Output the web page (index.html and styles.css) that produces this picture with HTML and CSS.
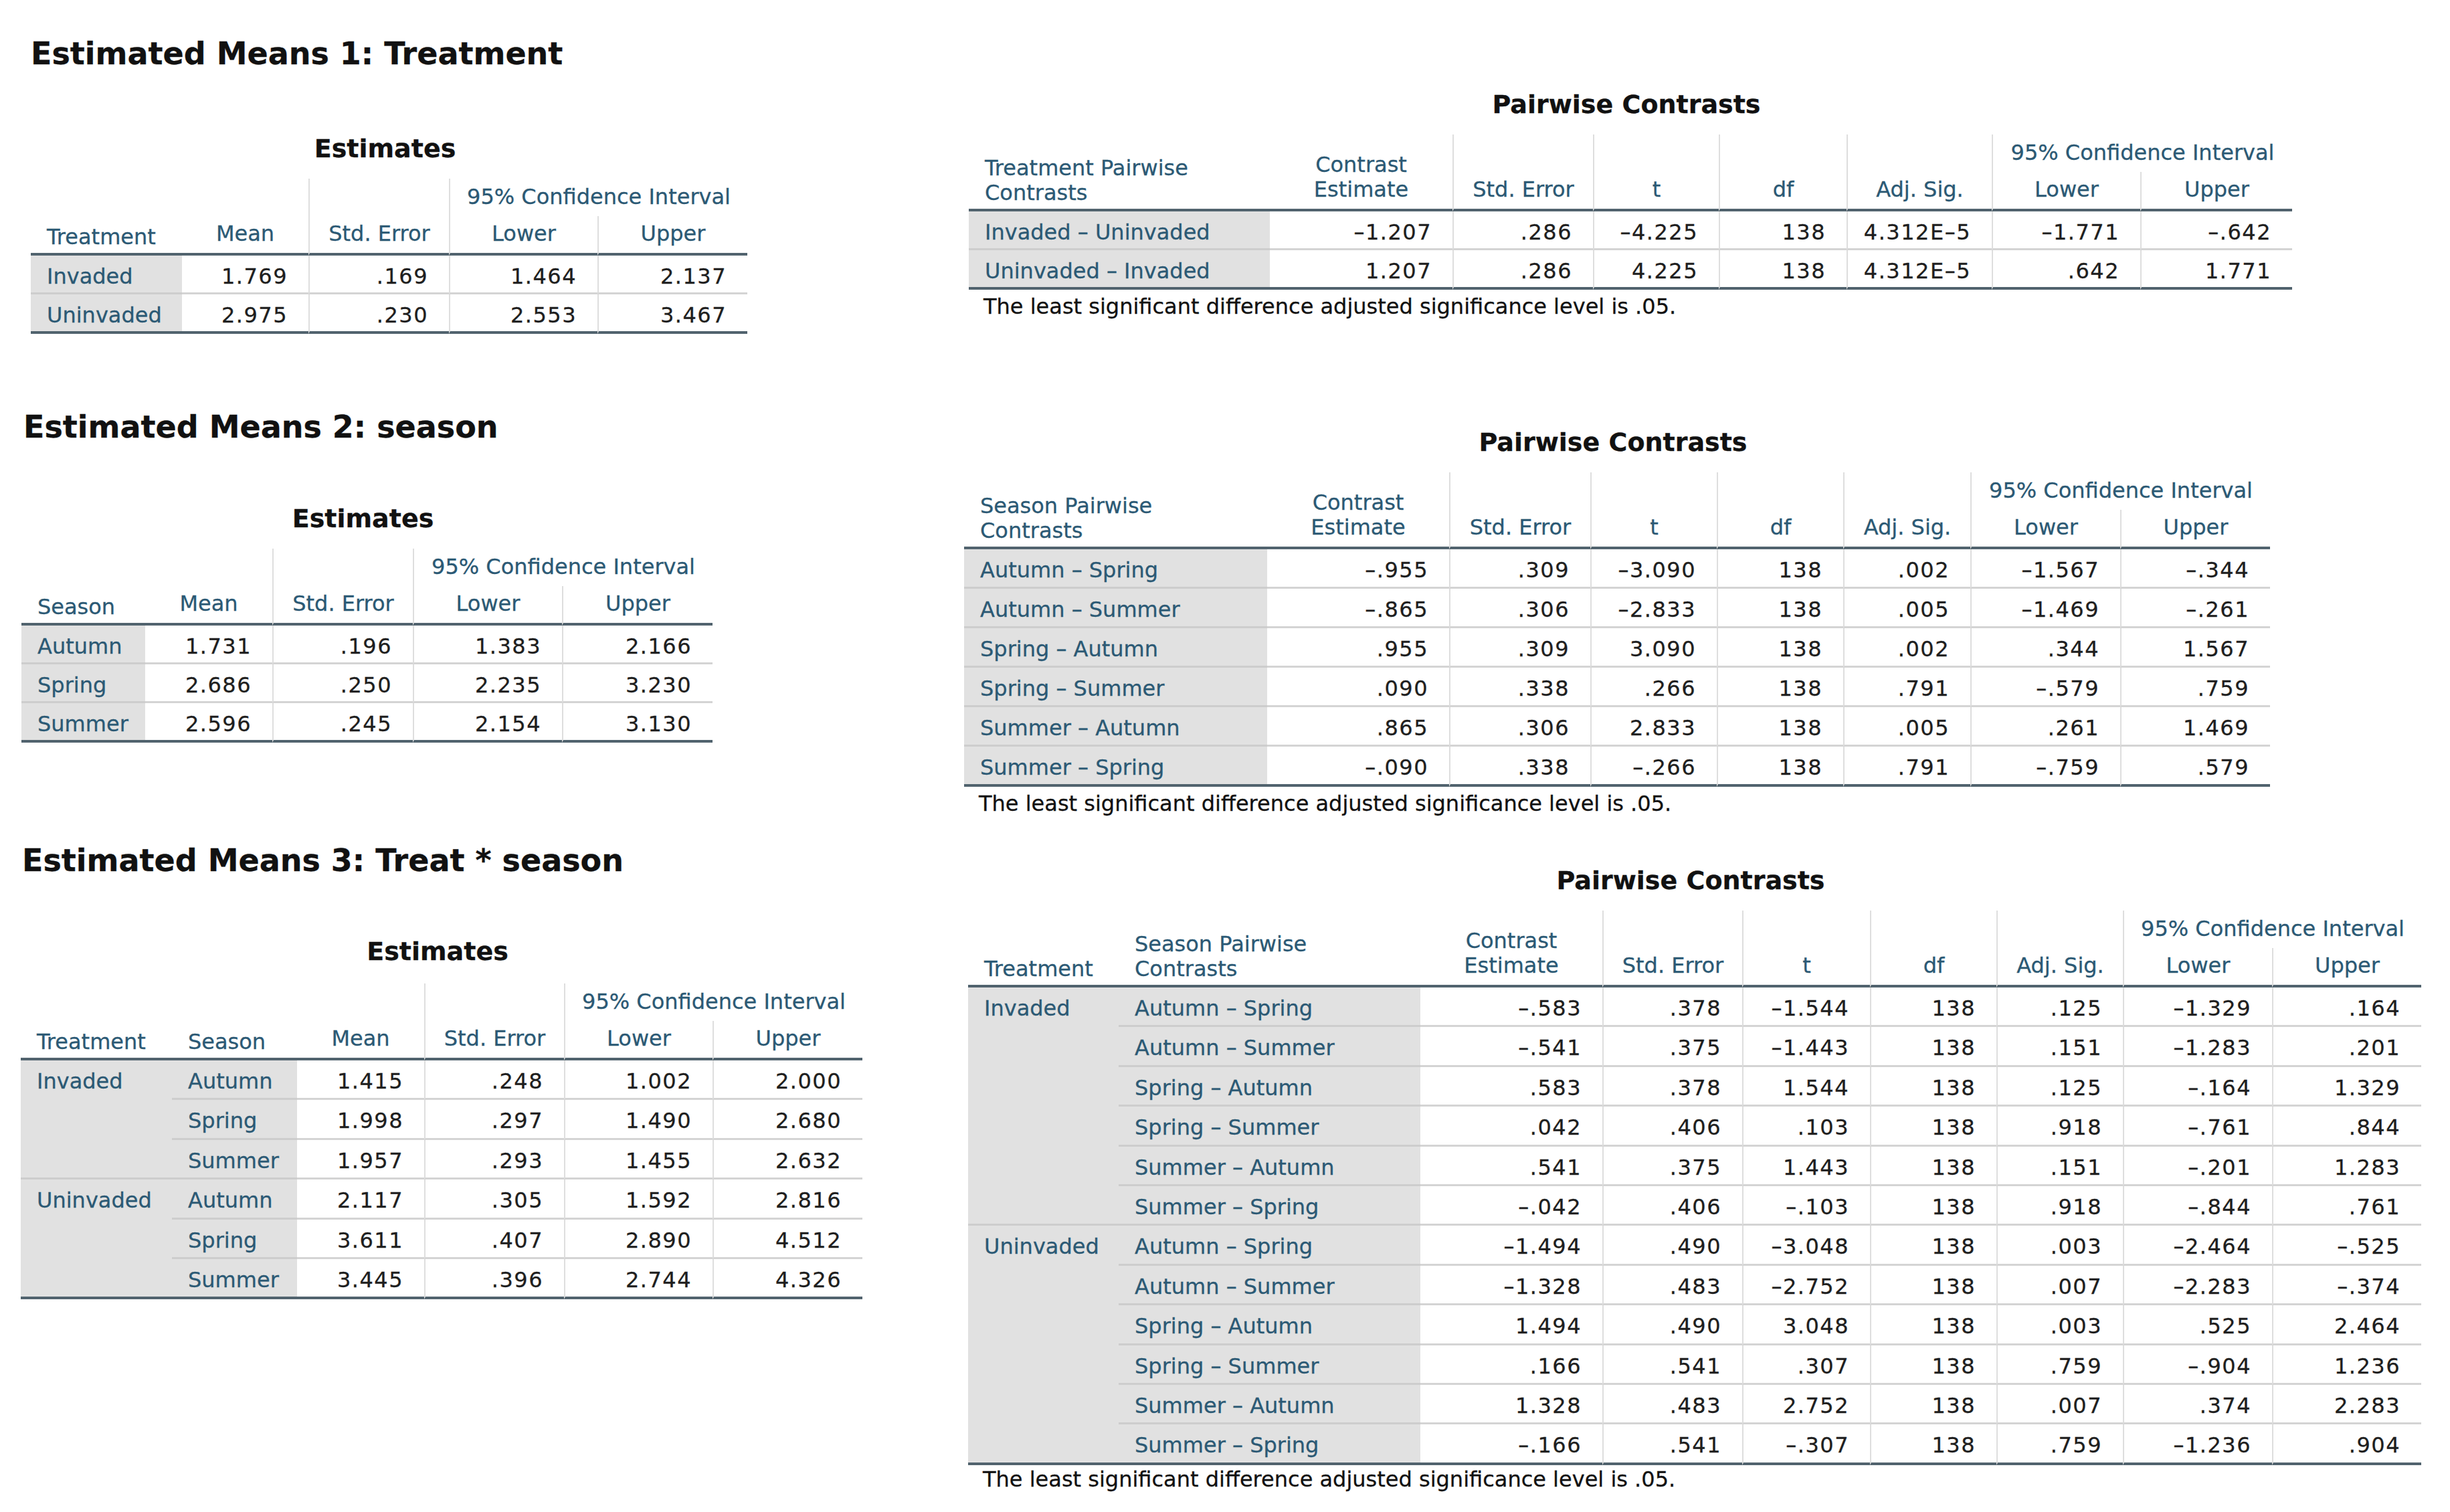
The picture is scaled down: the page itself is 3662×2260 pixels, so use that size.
FILE: index.html
```html
<!DOCTYPE html>
<html>
<head>
<meta charset="utf-8">
<title>Estimated Means</title>
<link rel="stylesheet" href="styles.css">
</head>
<body>
<div class="page">
  <div class="col-left">
    <section class="block b1">
      <h2 class="title">Estimated Means 1: Treatment</h2>
      <table class="t est est1">
        <caption>Estimates</caption>
        <colgroup><col><col><col><col><col></colgroup>
        <thead>
          <tr><th rowspan="2" class="hs lft">Treatment</th><th rowspan="2" class="hs">Mean</th><th rowspan="2" class="hs vl">Std. Error</th><th colspan="2" class="h1 vl">95% Confidence Interval</th></tr>
          <tr><th class="h2 vl">Lower</th><th class="h2 vl">Upper</th></tr>
        </thead>
        <tbody>
          <tr><th>Invaded</th><td>1.769</td><td>.169</td><td>1.464</td><td>2.137</td></tr>
          <tr><th>Uninvaded</th><td>2.975</td><td>.230</td><td>2.553</td><td>3.467</td></tr>
        </tbody>
      </table>
    </section>

    <section class="block b2">
      <h2 class="title">Estimated Means 2: season</h2>
      <table class="t est est2">
        <caption>Estimates</caption>
        <colgroup><col><col><col><col><col></colgroup>
        <thead>
          <tr><th rowspan="2" class="hs lft">Season</th><th rowspan="2" class="hs">Mean</th><th rowspan="2" class="hs vl">Std. Error</th><th colspan="2" class="h1 vl">95% Confidence Interval</th></tr>
          <tr><th class="h2 vl">Lower</th><th class="h2 vl">Upper</th></tr>
        </thead>
        <tbody>
          <tr><th>Autumn</th><td>1.731</td><td>.196</td><td>1.383</td><td>2.166</td></tr>
          <tr><th>Spring</th><td>2.686</td><td>.250</td><td>2.235</td><td>3.230</td></tr>
          <tr><th>Summer</th><td>2.596</td><td>.245</td><td>2.154</td><td>3.130</td></tr>
        </tbody>
      </table>
    </section>

    <section class="block b3">
      <h2 class="title">Estimated Means 3: Treat * season</h2>
      <table class="t est g est3">
        <caption>Estimates</caption>
        <colgroup><col><col><col><col><col><col></colgroup>
        <thead>
          <tr><th rowspan="2" class="hs lft">Treatment</th><th rowspan="2" class="hs lft">Season</th><th rowspan="2" class="hs">Mean</th><th rowspan="2" class="hs vl">Std. Error</th><th colspan="2" class="h1 vl">95% Confidence Interval</th></tr>
          <tr><th class="h2 vl">Lower</th><th class="h2 vl">Upper</th></tr>
        </thead>
        <tbody>
          <tr><th rowspan="3" class="grp">Invaded</th><th>Autumn</th><td>1.415</td><td>.248</td><td>1.002</td><td>2.000</td></tr>
          <tr><th>Spring</th><td>1.998</td><td>.297</td><td>1.490</td><td>2.680</td></tr>
          <tr><th>Summer</th><td>1.957</td><td>.293</td><td>1.455</td><td>2.632</td></tr>
          <tr><th rowspan="3" class="grp lastg">Uninvaded</th><th>Autumn</th><td>2.117</td><td>.305</td><td>1.592</td><td>2.816</td></tr>
          <tr><th>Spring</th><td>3.611</td><td>.407</td><td>2.890</td><td>4.512</td></tr>
          <tr><th>Summer</th><td>3.445</td><td>.396</td><td>2.744</td><td>4.326</td></tr>
        </tbody>
      </table>
    </section>
  </div>

  <div class="col-right">
    <section class="block pw1">
      <table class="t pw pwt1">
        <caption>Pairwise Contrasts</caption>
        <colgroup><col><col><col><col><col><col><col><col></colgroup>
        <thead>
          <tr><th rowspan="2" class="hs lft">Treatment Pairwise<br>Contrasts</th><th rowspan="2" class="hs">Contrast<br>Estimate</th><th rowspan="2" class="hs vl">Std. Error</th><th rowspan="2" class="hs vl">t</th><th rowspan="2" class="hs vl">df</th><th rowspan="2" class="hs vl">Adj. Sig.</th><th colspan="2" class="h1 vl">95% Confidence Interval</th></tr>
          <tr><th class="h2 vl">Lower</th><th class="h2 vl">Upper</th></tr>
        </thead>
        <tbody>
          <tr><th>Invaded – Uninvaded</th><td>–1.207</td><td>.286</td><td>–4.225</td><td>138</td><td>4.312E–5</td><td>–1.771</td><td>–.642</td></tr>
          <tr><th>Uninvaded – Invaded</th><td>1.207</td><td>.286</td><td>4.225</td><td>138</td><td>4.312E–5</td><td>.642</td><td>1.771</td></tr>
        </tbody>
      </table>
      <p class="note">The least significant difference adjusted significance level is .05.</p>
    </section>

    <section class="block pw2">
      <table class="t pw pwt2">
        <caption>Pairwise Contrasts</caption>
        <colgroup><col><col><col><col><col><col><col><col></colgroup>
        <thead>
          <tr><th rowspan="2" class="hs lft">Season Pairwise<br>Contrasts</th><th rowspan="2" class="hs">Contrast<br>Estimate</th><th rowspan="2" class="hs vl">Std. Error</th><th rowspan="2" class="hs vl">t</th><th rowspan="2" class="hs vl">df</th><th rowspan="2" class="hs vl">Adj. Sig.</th><th colspan="2" class="h1 vl">95% Confidence Interval</th></tr>
          <tr><th class="h2 vl">Lower</th><th class="h2 vl">Upper</th></tr>
        </thead>
        <tbody>
          <tr><th>Autumn – Spring</th><td>–.955</td><td>.309</td><td>–3.090</td><td>138</td><td>.002</td><td>–1.567</td><td>–.344</td></tr>
          <tr><th>Autumn – Summer</th><td>–.865</td><td>.306</td><td>–2.833</td><td>138</td><td>.005</td><td>–1.469</td><td>–.261</td></tr>
          <tr><th>Spring – Autumn</th><td>.955</td><td>.309</td><td>3.090</td><td>138</td><td>.002</td><td>.344</td><td>1.567</td></tr>
          <tr><th>Spring – Summer</th><td>.090</td><td>.338</td><td>.266</td><td>138</td><td>.791</td><td>–.579</td><td>.759</td></tr>
          <tr><th>Summer – Autumn</th><td>.865</td><td>.306</td><td>2.833</td><td>138</td><td>.005</td><td>.261</td><td>1.469</td></tr>
          <tr><th>Summer – Spring</th><td>–.090</td><td>.338</td><td>–.266</td><td>138</td><td>.791</td><td>–.759</td><td>.579</td></tr>
        </tbody>
      </table>
      <p class="note">The least significant difference adjusted significance level is .05.</p>
    </section>

    <section class="block pw3">
      <table class="t pw g pwt3">
        <caption>Pairwise Contrasts</caption>
        <colgroup><col><col><col><col><col><col><col><col><col></colgroup>
        <thead>
          <tr><th rowspan="2" class="hs lft">Treatment</th><th rowspan="2" class="hs lft">Season Pairwise<br>Contrasts</th><th rowspan="2" class="hs">Contrast<br>Estimate</th><th rowspan="2" class="hs vl">Std. Error</th><th rowspan="2" class="hs vl">t</th><th rowspan="2" class="hs vl">df</th><th rowspan="2" class="hs vl">Adj. Sig.</th><th colspan="2" class="h1 vl">95% Confidence Interval</th></tr>
          <tr><th class="h2 vl">Lower</th><th class="h2 vl">Upper</th></tr>
        </thead>
        <tbody>
          <tr><th rowspan="6" class="grp">Invaded</th><th>Autumn – Spring</th><td>–.583</td><td>.378</td><td>–1.544</td><td>138</td><td>.125</td><td>–1.329</td><td>.164</td></tr>
          <tr><th>Autumn – Summer</th><td>–.541</td><td>.375</td><td>–1.443</td><td>138</td><td>.151</td><td>–1.283</td><td>.201</td></tr>
          <tr><th>Spring – Autumn</th><td>.583</td><td>.378</td><td>1.544</td><td>138</td><td>.125</td><td>–.164</td><td>1.329</td></tr>
          <tr><th>Spring – Summer</th><td>.042</td><td>.406</td><td>.103</td><td>138</td><td>.918</td><td>–.761</td><td>.844</td></tr>
          <tr><th>Summer – Autumn</th><td>.541</td><td>.375</td><td>1.443</td><td>138</td><td>.151</td><td>–.201</td><td>1.283</td></tr>
          <tr><th>Summer – Spring</th><td>–.042</td><td>.406</td><td>–.103</td><td>138</td><td>.918</td><td>–.844</td><td>.761</td></tr>
          <tr><th rowspan="6" class="grp lastg">Uninvaded</th><th>Autumn – Spring</th><td>–1.494</td><td>.490</td><td>–3.048</td><td>138</td><td>.003</td><td>–2.464</td><td>–.525</td></tr>
          <tr><th>Autumn – Summer</th><td>–1.328</td><td>.483</td><td>–2.752</td><td>138</td><td>.007</td><td>–2.283</td><td>–.374</td></tr>
          <tr><th>Spring – Autumn</th><td>1.494</td><td>.490</td><td>3.048</td><td>138</td><td>.003</td><td>.525</td><td>2.464</td></tr>
          <tr><th>Spring – Summer</th><td>.166</td><td>.541</td><td>.307</td><td>138</td><td>.759</td><td>–.904</td><td>1.236</td></tr>
          <tr><th>Summer – Autumn</th><td>1.328</td><td>.483</td><td>2.752</td><td>138</td><td>.007</td><td>.374</td><td>2.283</td></tr>
          <tr><th>Summer – Spring</th><td>–.166</td><td>.541</td><td>–.307</td><td>138</td><td>.759</td><td>–1.236</td><td>.904</td></tr>
        </tbody>
      </table>
      <p class="note">The least significant difference adjusted significance level is .05.</p>
    </section>
  </div>
</div>
</body>
</html>
```

FILE: styles.css
```css
* { box-sizing: border-box; }
html, body { margin: 0; padding: 0; background: #ffffff; }
body {
  font-family: "DejaVu Sans", "Liberation Sans", sans-serif;
  color: #1c1c1c;
}
.page {
  display: flex;
  align-items: flex-start;
  width: 3662px;
  height: 2260px;
  overflow: hidden;
}
.col-left { width: 1441px; flex: none; }
.col-right { flex: 1; }

.block {
  display: flex;
  flex-direction: column;
  align-items: flex-start;
}

.title {
  margin: 0;
  font-size: 46px;
  line-height: 56px;
  font-weight: bold;
  color: #111111;
  -webkit-text-stroke: 0.3px #111111;
}

/* left column blocks */
.b1 { padding-left: 46px; margin-top: 52px; }
.b1 .est { margin-top: 91px; }
.b2 { padding-left: 32px; margin-top: 111px; }
.b2 .title { margin-left: 3px; }
.b2 .est { margin-top: 86px; }
.b3 { padding-left: 31px; margin-top: 148px; }
.b3 .title { margin-left: 2px; }
.b3 .est { margin-top: 85px; }
.b3 .est caption { padding-bottom: 25px; }

/* right column blocks */
.pw1 { margin-top: 133px; margin-left: 7px; }
.pw2 { margin-top: 161px; margin-left: 0; }
.pw3 { margin-top: 73px; margin-left: 6px; }
.pw3 caption { padding-bottom: 25px; }
.pw3 .note { margin-top: 3px; }

.note {
  margin: 7px 0 0 0;
  padding-left: 22px;
  font-size: 32px;
  line-height: 37px;
  color: #111111;
  -webkit-text-stroke: 0.3px #111111;
}

/* tables */
table.t {
  border-collapse: separate;
  border-spacing: 0;
  table-layout: fixed;
  font-size: 32px;
  line-height: 37px;
}
.t caption {
  caption-side: top;
  font-size: 38px;
  line-height: 46px;
  font-weight: bold;
  color: #111111;
  -webkit-text-stroke: 0.3px #111111;
  text-align: center;
  padding: 0 12px 22px 0;
}
.t th, .t td { padding: 0; white-space: nowrap; }

.t thead th {
  font-weight: normal;
  color: #2b5974;
  -webkit-text-stroke: 0.3px #2b5974;
  text-align: center;
  vertical-align: bottom;
}
.t thead .hs { padding: 0 0 10px 0; border-bottom: 4px solid #51636e; }
.t thead .h1 { padding: 9px 0 10px 0; }
.t thead .h2 { padding: 8px 0 10px 0; border-bottom: 4px solid #51636e; }
.t thead .lft { text-align: left; padding-left: 24px; padding-bottom: 5px; }
.t .vl { border-left: 2px solid #dedede; }

.t tbody th {
  font-weight: normal;
  color: #2b5974;
  -webkit-text-stroke: 0.3px #2b5974;
  text-align: left;
  vertical-align: top;
  padding: 13px 0 5px 24px;
  background: #e1e1e1;
  border-bottom: 3px solid #cdcdcd;
}
.t tbody td {
  text-align: right;
  vertical-align: top;
  padding: 13px 31px 5px 0;
  letter-spacing: 1.5px;
  color: #1e1e1e;
  -webkit-text-stroke: 0.3px #1e1e1e;
  border-bottom: 3px solid #d4d4d4;
}
.t tbody td + td { border-left: 2px solid #dedede; }
.t tbody tr:last-child th,
.t tbody tr:last-child td,
.t tbody th.lastg { border-bottom: 4px solid #51636e; }

.pwt2 tbody th, .pwt2 tbody td { padding-bottom: 6px; }
.g tbody th, .g tbody td { padding-bottom: 6.4px; }

/* column widths */
.est1 { width: 1071px; }
.est1 col:nth-child(1) { width: 226px; }
.est1 col:nth-child(2) { width: 189px; }
.est1 col:nth-child(3) { width: 210px; }
.est1 col:nth-child(4) { width: 222px; }
.est1 col:nth-child(5) { width: 224px; }

.est2 { width: 1033px; }
.est2 col:nth-child(1) { width: 185px; }
.est2 col:nth-child(2) { width: 190px; }
.est2 col:nth-child(3) { width: 210px; }
.est2 col:nth-child(4) { width: 223px; }
.est2 col:nth-child(5) { width: 225px; }

.est3 { width: 1258px; }
.est3 col:nth-child(1) { width: 226px; }
.est3 col:nth-child(2) { width: 187px; }
.est3 col:nth-child(3) { width: 190px; }
.est3 col:nth-child(4) { width: 209px; }
.est3 col:nth-child(5) { width: 222px; }
.est3 col:nth-child(6) { width: 224px; }

.pwt1 { width: 1978px; }
.pwt1 col:nth-child(1) { width: 450px; }
.pwt1 col:nth-child(2) { width: 273px; }
.pwt1 col:nth-child(3) { width: 210px; }
.pwt1 col:nth-child(4) { width: 188px; }
.pwt1 col:nth-child(5) { width: 191px; }
.pwt1 col:nth-child(6) { width: 217px; }
.pwt1 col:nth-child(7) { width: 222px; }
.pwt1 col:nth-child(8) { width: 227px; }

.pwt2 { width: 1952px; }
.pwt2 col:nth-child(1) { width: 453px; }
.pwt2 col:nth-child(2) { width: 272px; }
.pwt2 col:nth-child(3) { width: 211px; }
.pwt2 col:nth-child(4) { width: 189px; }
.pwt2 col:nth-child(5) { width: 189px; }
.pwt2 col:nth-child(6) { width: 190px; }
.pwt2 col:nth-child(7) { width: 224px; }
.pwt2 col:nth-child(8) { width: 224px; }

.pwt3 { width: 2172px; }
.pwt3 col:nth-child(1) { width: 225px; }
.pwt3 col:nth-child(2) { width: 451px; }
.pwt3 col:nth-child(3) { width: 272px; }
.pwt3 col:nth-child(4) { width: 209px; }
.pwt3 col:nth-child(5) { width: 191px; }
.pwt3 col:nth-child(6) { width: 189px; }
.pwt3 col:nth-child(7) { width: 189px; }
.pwt3 col:nth-child(8) { width: 223px; }
.pwt3 col:nth-child(9) { width: 223px; }
```
